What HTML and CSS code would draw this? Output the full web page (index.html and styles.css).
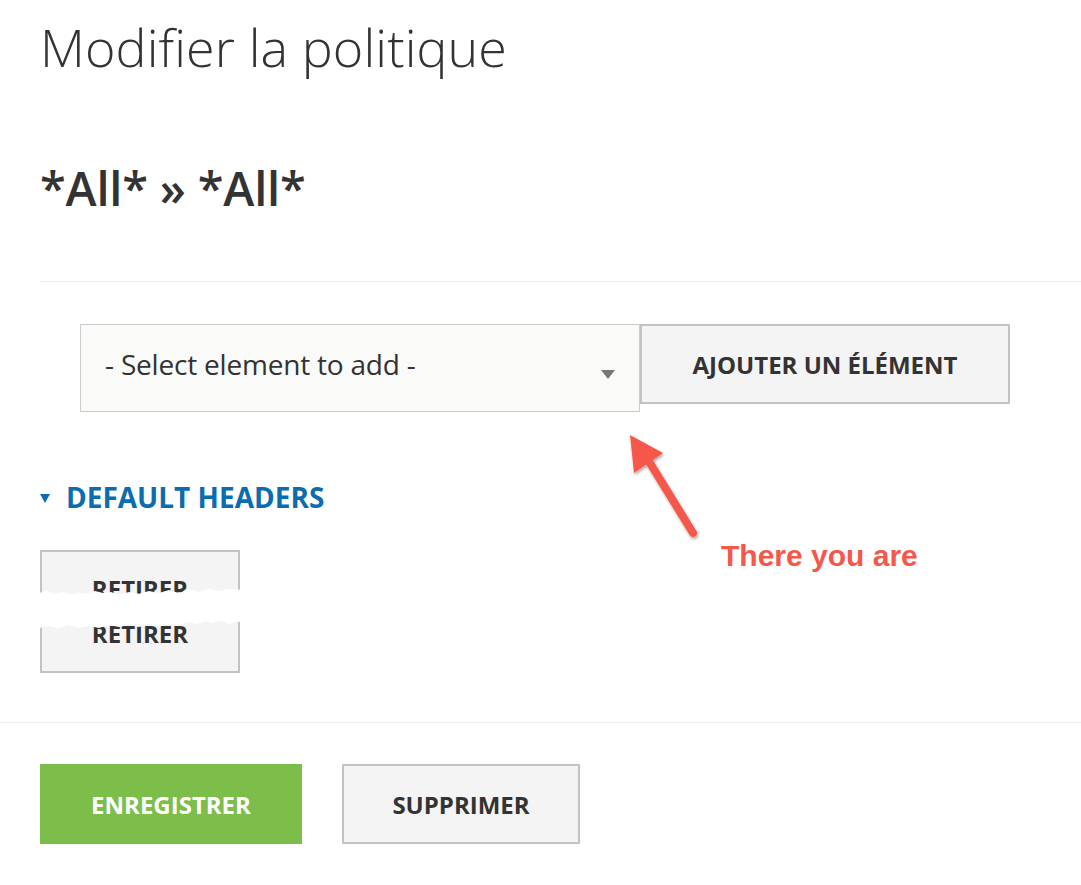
FILE: index.html
```html
<!DOCTYPE html>
<html lang="fr">
<head>
<meta charset="utf-8">
<title>Modifier la politique</title>
<link rel="stylesheet" href="styles.css">
</head>
<body>
<div class="page">
  <div class="content">
    <h1 class="title">Modifier la politique</h1>
    <h2 class="subtitle">*All* » *All*</h2>
    <hr class="rule">
    <div class="add-row">
      <div class="select">
        <span class="select-text">- Select element to add -</span>
        <span class="caret"></span>
      </div>
      <button class="btn btn-add">AJOUTER UN ÉLÉMENT</button>
    </div>
    <div class="section-toggle">
      <span class="toggle-tri"></span>
      <span class="toggle-label">DEFAULT HEADERS</span>
    </div>
    <button class="btn btn-remove">
      <span class="remove-label">RETIRER</span>
      <span class="remove-label">RETIRER</span>
      <svg class="tear" viewBox="0 0 206 42" preserveAspectRatio="none" aria-hidden="true">
        <path d="M0 5 L8 3 L16 6 L24 4 L32 7 L40 5 L48 6 L56 3 L64 5 L72 4 L80 7 L90 4 L100 6 L110 3 L120 5 L130 2 L140 5 L150 1 L160 4 L170 1 L180 3 L190 1 L206 2 L206 37 L198 34 L190 37 L182 33 L174 36 L166 34 L158 37 L150 35 L140 38 L130 37 L120 39 L110 37 L100 40 L90 38 L80 40 L70 38 L60 41 L50 39 L40 41 L30 38 L20 41 L10 39 L0 41 Z" fill="#ffffff"/>
      </svg>
    </button>
  </div>
  <hr class="rule rule-full">
  <div class="actions">
    <button class="btn btn-save">ENREGISTRER</button>
    <button class="btn btn-delete">SUPPRIMER</button>
  </div>

  <svg class="annot-arrow" width="120" height="130" viewBox="0 0 120 130" aria-hidden="true">
    <defs>
      <filter id="sh" x="-30%" y="-30%" width="160%" height="160%">
        <feDropShadow dx="1" dy="2" stdDeviation="1.5" flood-color="#000" flood-opacity="0.35"/>
      </filter>
    </defs>
    <g filter="url(#sh)">
      <line x1="81" y1="111" x2="30" y2="28" stroke="#f5584b" stroke-width="8" stroke-linecap="round"/>
      <polygon points="18,13 51,31 22,51" fill="#f5584b"/>
    </g>
  </svg>
  <div class="annot-text">There you are</div>
</div>
</body>
</html>
```
FILE: styles.css
```css
html, body {
  margin: 0;
  padding: 0;
  background: #ffffff;
}

.page {
  position: relative;
  width: 1081px;
  min-height: 885px;
  font-family: "Open Sans", "DejaVu Sans", sans-serif;
  color: #333333;
}

.content {
  padding-left: 40px;
}

.title {
  margin: 0;
  padding-top: 21px;
  font-size: 52px;
  font-weight: 300;
  line-height: 1;
  color: #333333;
  letter-spacing: 0.1px;
}

.subtitle {
  margin: 92px 0 0 0;
  font-size: 47px;
  font-weight: 600;
  line-height: 1;
  color: #333333;
  letter-spacing: -0.2px;
}

.rule {
  margin: 0;
  border: 0;
  height: 1px;
  background: #eeeeee;
}

.content .rule {
  margin-top: 69px;
}

.rule-full {
  margin-top: 49px;
  width: 100%;
}

.add-row {
  display: flex;
  align-items: flex-start;
  margin: 42px 0 0 40px;
}

.select {
  box-sizing: border-box;
  width: 560px;
  height: 88px;
  border: 1px solid #cccccc;
  background: #fafaf8;
  display: flex;
  align-items: center;
  justify-content: space-between;
  padding: 0 24px 0 24px;
}

.select-text {
  font-size: 28px;
  color: #333333;
  margin-top: -8px;
  letter-spacing: -0.2px;
}

.caret {
  width: 0;
  height: 0;
  border-left: 7px solid transparent;
  border-right: 7px solid transparent;
  border-top: 9px solid #777777;
  margin-top: 12px;
}

.btn {
  box-sizing: border-box;
  font-family: "Open Sans", "DejaVu Sans", sans-serif;
  font-weight: 700;
  font-size: 24px;
  color: #333333;
  background: #f4f4f4;
  border: 2px solid #c2c2c2;
  padding: 0;
  margin: 0;
  cursor: pointer;
  letter-spacing: 0;
}

.btn-add {
  width: 370px;
  height: 80px;
}

.section-toggle {
  display: flex;
  align-items: center;
  gap: 16px;
  margin-top: 67px;
  height: 36px;
}

.toggle-tri {
  width: 0;
  height: 0;
  border-left: 5px solid transparent;
  border-right: 5px solid transparent;
  border-top: 9px solid #0c6cb0;
  margin-top: 2px;
}

.toggle-label {
  font-size: 28px;
  font-weight: 700;
  color: #0c6cb0;
  letter-spacing: 0;
}

.btn-remove {
  position: relative;
  display: flex;
  flex-direction: column;
  align-items: center;
  justify-content: center;
  gap: 21px;
  width: 200px;
  height: 123px;
  margin-top: 35px;
  overflow: visible;
}

.remove-label {
  display: block;
  line-height: 24px;
  height: 24px;
}

.tear {
  position: absolute;
  left: -3px;
  top: 36px;
  width: 206px;
  height: 41px;
}

.actions {
  display: flex;
  gap: 40px;
  padding-left: 40px;
  margin-top: 41px;
}

.btn-save {
  width: 262px;
  height: 80px;
  background: #7dbd4a;
  border-color: #7dbd4a;
  color: #ffffff;
}

.btn-delete {
  width: 238px;
  height: 80px;
}

.annot-arrow {
  position: absolute;
  left: 612px;
  top: 422px;
}

.annot-text {
  position: absolute;
  left: 721px;
  top: 539px;
  font-family: "Liberation Sans", Arial, sans-serif;
  font-weight: 700;
  font-size: 30px;
  color: #f5584b;
  white-space: nowrap;
}
```
